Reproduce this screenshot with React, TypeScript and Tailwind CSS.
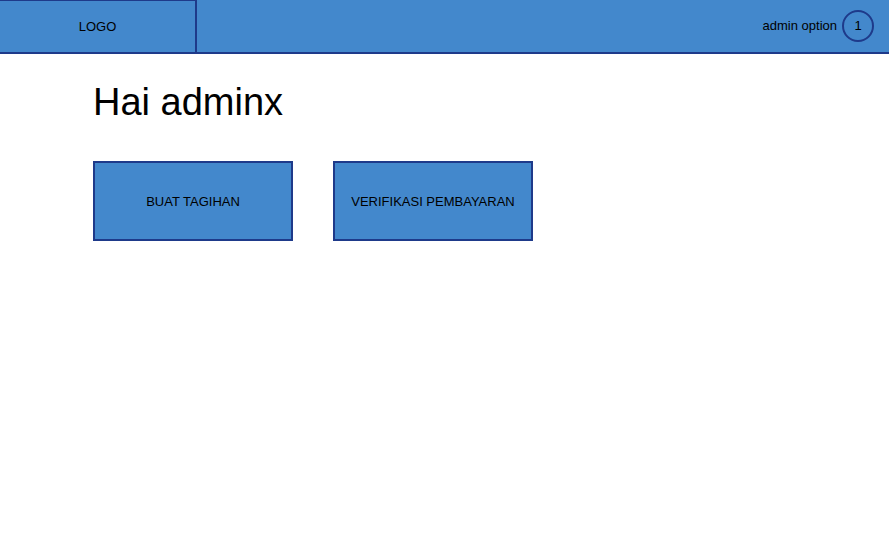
export default function App() {
  return (
    <div className="min-h-screen bg-white text-black" style={{ fontFamily: '"Liberation Sans", Arial, sans-serif' }}>
      <header className="flex h-[54px] items-center justify-between border-b-2 border-[#1e3a8a] bg-[#4388cc]">
        <div className="flex h-full w-[197px] items-center justify-center border-t border-r-2 border-[#1e3a8a] text-[13px]">
          LOGO
        </div>
        <div className="flex items-center gap-[5px] pr-[15px] text-[13px]">
          <span>admin option</span>
          <div className="flex h-[32px] w-[32px] items-center justify-center rounded-full border-2 border-[#1e3a8a] pb-[1px] text-[13px] leading-none">
            1
          </div>
        </div>
      </header>

      <main className="px-[93px] pt-[25px]">
        <h1 className="text-[38px] leading-[46px]">Hai adminx</h1>
        <div className="mt-[36px] flex gap-[40px]">
          <button className="flex h-[80px] w-[200px] items-center justify-center border-2 border-[#1e3a8a] bg-[#4388cc] pt-[1px] text-[13px]">
            BUAT TAGIHAN
          </button>
          <button className="flex h-[80px] w-[200px] items-center justify-center border-2 border-[#1e3a8a] bg-[#4388cc] pt-[1px] text-[13px]">
            VERIFIKASI PEMBAYARAN
          </button>
        </div>
      </main>
    </div>
  );
}
